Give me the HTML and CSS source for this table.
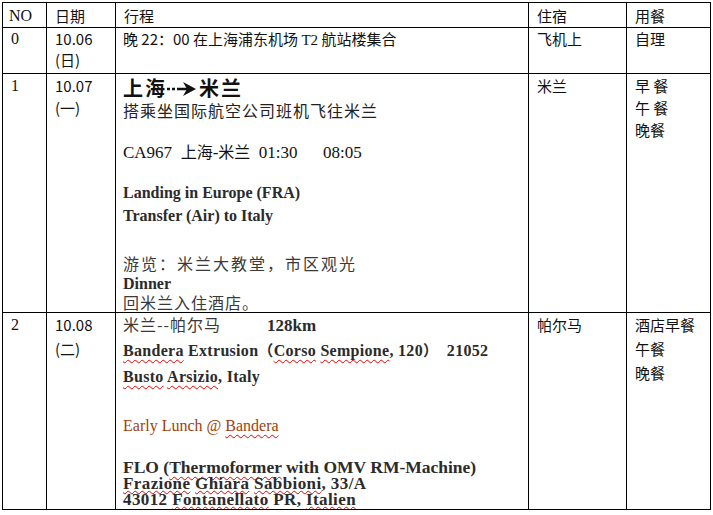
FILE: index.html
```html
<!DOCTYPE html>
<html lang="zh-CN">
<head>
  <meta charset="UTF-8" />
  <title>行程安排</title>
  <link rel="stylesheet" href="styles.css">
</head>
<body>
  <table class="trip">
    <colgroup>
      <col class="c-no">
      <col class="c-date">
      <col class="c-plan">
      <col class="c-hotel">
      <col class="c-meal">
    </colgroup>
    <tr class="head">
      <td class="en">NO</td>
      <td class="zh">日期</td>
      <td class="zh">行程</td>
      <td class="zh">住宿</td>
      <td class="zh">用餐</td>
    </tr>
    <tr class="day0">
      <td class="en">0</td>
      <td class="zh">10.06<br>(日)</td>
      <td class="zh plan0">晚 22：00 在上海浦东机场 <span class="en">T2</span> 航站楼集合</td>
      <td class="zh">飞机上</td>
      <td class="zh">自理</td>
    </tr>
    <tr class="day1">
      <td class="en">1</td>
      <td class="zh">10.07<br>(一)</td>
      <td class="plan">
        <div class="title">上海<svg class="arrow" width="30" height="16" viewBox="0 0 30 16"><path d="M0 8h3M5 8h3M10 8h12" stroke="#111" stroke-width="2.4"/><path d="M16 1l13 7-13 7 4-7z" fill="#111"/></svg>米兰</div>
        <div class="sub">搭乘坐国际航空公司班机飞往米兰</div>
        <div class="flight">CA967&nbsp; <span class="zh">上海</span>-<span class="zh">米兰</span>&nbsp; 01:30 &nbsp; &nbsp; &nbsp;08:05</div>
        <div class="bold l1">Landing in Europe (FRA)</div>
        <div class="bold l2">Transfer (Air) to Italy</div>
        <div class="zh grey tour">游览：米兰大教堂，市区观光</div>
        <div class="bold dinner">Dinner</div>
        <div class="zh grey back">回米兰入住酒店。</div>
      </td>
      <td class="zh">米兰</td>
      <td class="zh meals">早 餐<br>午 餐<br>晚餐</td>
    </tr>
    <tr class="day2">
      <td class="en">2</td>
      <td class="zh">10.08<br>(二)</td>
      <td class="plan">
        <div class="route"><span class="zh grey">米兰--帕尔马</span><span class="bold km">128km</span></div>
        <div class="bold addr"><span class="sp">Bandera</span> Extrusion<span class="zh">（</span><span class="sp">Corso</span> <span class="sp">Sempione</span>, 120<span class="zh">）</span> &nbsp;21052</div>
        <div class="bold addr"><span class="sp">Busto</span> <span class="sp">Arsizio</span>, Italy</div>
        <div class="lunch">Early Lunch @ <span class="sp">Bandera</span></div>
        <div class="bold flo">FLO (<span class="sp">Thermoformer</span> with OMV RM-Machine)</div>
        <div class="bold flo2"><span class="sp">Frazione</span> <span class="sp">Ghiara</span> <span class="sp">Sabbioni</span>, 33/A</div>
        <div class="bold flo2">43012 <span class="sp">Fontanellato</span> PR, <span class="sp">Italien</span></div>
      </td>
      <td class="zh">帕尔马</td>
      <td class="zh meals2">酒店早餐<br>午餐<br>晚餐</td>
    </tr>
  </table>
</body>
</html>
```

FILE: styles.css
```css
body {
  margin: 0;
  padding: 2px 0 0 2px;
  background: #fff;
  color: #111;
  font-family: "Liberation Serif", "Noto Sans CJK SC", serif;
  font-size: 16px;
}

.trip {
  border-collapse: collapse;
  table-layout: fixed;
  width: 708px;
}

.c-no { width: 44px; }
.c-date { width: 69px; }
.c-plan { width: 413px; }
.c-hotel { width: 98px; }
.c-meal { width: 84px; }

.trip td {
  border: 1px solid #000;
  vertical-align: top;
  padding: 0 0 0 8px;
  overflow: hidden;
}

.zh {
  font-family: "Noto Sans CJK SC", "Liberation Sans", sans-serif;
  font-size: 15px;
}

.en {
  font-family: "Liberation Serif", serif;
}

.head { height: 24px; }
.head td { line-height: 23px; padding-top: 1px; }
.head td.en { padding-left: 6px; }

.day0 { height: 46px; }
.day0 td { line-height: 21px; }

.day1 { height: 239px; }
.day1 td { line-height: 22px; padding-top: 1px; }

.day2 { height: 197px; }
.day2 td { line-height: 24px; }

.trip td.plan,
.trip td.plan0 { padding-left: 7px; }

.title {
  font-family: "Noto Sans CJK SC", sans-serif;
  font-weight: bold;
  font-size: 20px;
  line-height: 25px;
  letter-spacing: 2px;
}

.arrow {
  vertical-align: -1px;
  margin: 0 2px 0 0;
}

.sub {
  font-family: "Noto Sans CJK SC", sans-serif;
  font-size: 16px;
  line-height: 20px;
  letter-spacing: 1px;
  color: #222;
}

.flight {
  margin-top: 21px;
  line-height: 20px;
  font-size: 17px;
}

.flight .zh { font-size: 16px; }

.bold {
  font-family: "Liberation Serif", serif;
  font-weight: bold;
  color: #2b2b2b;
}

.l1 { margin-top: 18px; line-height: 23px; }
.l2 { line-height: 23px; }

.grey { color: #3a3a3a; }

.tour {
  margin-top: 26px;
  line-height: 20px;
  font-size: 16px;
  letter-spacing: 2px;
}

.dinner { line-height: 18px; margin-top: 2px; }
.back { line-height: 18px; font-size: 16px; letter-spacing: 1px; }

.meals { line-height: 22px; }

.route { line-height: 22px; }
.route .zh { font-size: 16px; letter-spacing: 1px; }
.km { margin-left: 46px; font-size: 17px; }

.addr { line-height: 26px; margin-top: 0; letter-spacing: 0.3px; }

.sp {
  text-decoration: underline wavy #e00;
  text-decoration-thickness: 1px;
  text-underline-offset: 3px;
}

.flo2 .sp { text-underline-offset: 1px; }

.lunch {
  margin-top: 25px;
  line-height: 22px;
  color: #a0410d;
}

.flo { margin-top: 21px; line-height: 18px; font-size: 17.5px; }
.flo2 { line-height: 16px; font-size: 17px; letter-spacing: 0.4px; }

.meals2 { line-height: 23px; }
```
